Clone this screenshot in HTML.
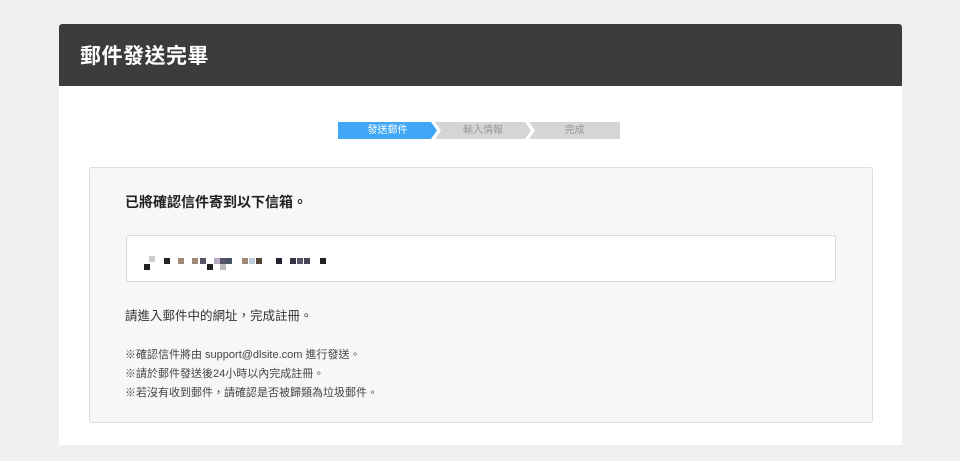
<!DOCTYPE html>
<html><head><meta charset="utf-8"><style>
*{margin:0;padding:0;box-sizing:border-box}
body{width:960px;height:461px;background:#f0f0f0;font-family:"Liberation Sans","Noto Sans CJK TC",sans-serif;position:relative;overflow:hidden;color:#333}
.card{position:absolute;left:59px;top:24px;width:843px;height:421px;background:#fff}
.hd{height:62px;background:#3c3c3c;border-radius:3px 3px 0 0;color:#fff;font-size:21px;font-weight:bold;padding:16px 0 0 21px;letter-spacing:0.5px}
.st{position:absolute;top:122px;height:17px;font-size:10px;line-height:17px;text-align:center;color:#999}
.box{position:absolute;left:89px;top:167px;width:784px;height:256px;background:#f7f7f7;border:1px solid #ddd;border-radius:3px}
.inp{position:absolute;left:126px;top:235px;width:710px;height:47px;background:#fff;border:1px solid #d8d8d8;border-radius:3px}
.px{position:absolute;width:6px;height:6px}
</style></head><body>
<div class="card"><div class="hd">郵件發送完畢</div></div>
<div class="st" style="left:529px;width:91px;background:#d5d5d5;clip-path:polygon(0 0,100% 0,100% 100%,0 100%,6px 50%)">完成</div>
<div class="st" style="left:435px;width:96px;background:#d5d5d5;clip-path:polygon(0 0,90px 0,100% 50%,90px 100%,0 100%,6px 50%)">輸入情報</div>
<div class="st" style="left:338px;width:99px;background:#3fa7f5;color:#fff;clip-path:polygon(0 0,93px 0,100% 50%,93px 100%,0 100%)">發送郵件</div>
<div class="box"></div>
<div style="position:absolute;left:125px;top:192px;font-size:14px;font-weight:bold;color:#222">已將確認信件寄到以下信箱。</div>
<div class="inp"></div>
<div class="px" style="left:144px;top:264px;background:#222"></div>
<div class="px" style="left:149px;top:256px;background:#ccc"></div>
<div class="px" style="left:164px;top:258px;background:#222"></div>
<div class="px" style="left:178px;top:258px;background:#a08878"></div>
<div class="px" style="left:192px;top:258px;background:#a08878"></div>
<div class="px" style="left:200px;top:258px;background:#556"></div>
<div class="px" style="left:207px;top:264px;background:#222"></div>
<div class="px" style="left:214px;top:258px;background:#b8aac0"></div>
<div class="px" style="left:220px;top:258px;background:#556"></div>
<div class="px" style="left:226px;top:258px;background:#456"></div>
<div class="px" style="left:220px;top:264px;background:#bbb"></div>
<div class="px" style="left:242px;top:258px;background:#a08878"></div>
<div class="px" style="left:249px;top:258px;background:#bcd"></div>
<div class="px" style="left:256px;top:258px;background:#543"></div>
<div class="px" style="left:276px;top:258px;background:#223"></div>
<div class="px" style="left:290px;top:258px;background:#334"></div>
<div class="px" style="left:297px;top:258px;background:#556"></div>
<div class="px" style="left:304px;top:258px;background:#445"></div>
<div class="px" style="left:320px;top:258px;background:#222"></div>
<div style="position:absolute;left:125px;top:305px;font-size:12.5px;color:#333">請進入郵件中的網址，完成註冊。</div>
<div style="position:absolute;left:125px;top:346px;font-size:11px;line-height:19px;color:#444">※確認信件將由 support@dlsite.com 進行發送。<br>※請於郵件發送後24小時以內完成註冊。<br>※若沒有收到郵件，請確認是否被歸類為垃圾郵件。</div>
</body></html>
